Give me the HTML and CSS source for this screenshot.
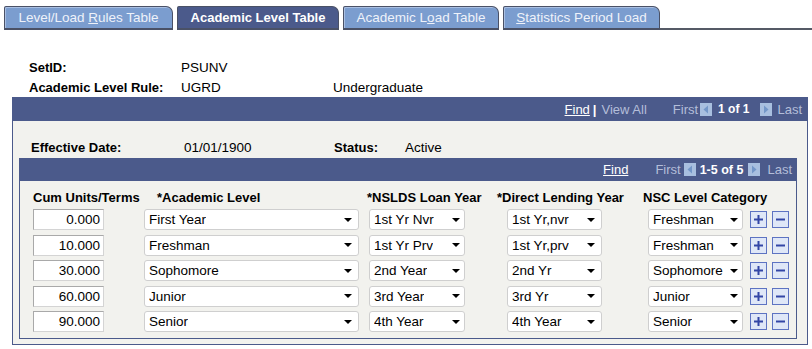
FILE: index.html
```html
<!DOCTYPE html>
<html>
<head>
<meta charset="utf-8">
<link rel="stylesheet" href="styles.css">
</head>
<body>
<div class="tabbar">
  <div class="tab t1"><span>Level/Load <u>R</u>ules Table</span></div>
  <div class="tab t2 active"><span>Academic Level Table</span></div>
  <div class="tab t3"><span>Academic L<u>o</u>ad Table</span></div>
  <div class="tab t4"><span><u>S</u>tatistics Period Load</span></div>
  <div class="tabfill"></div>
</div>

<div class="info">
  <div class="lbl">SetID:</div><div class="val">PSUNV</div><div class="desc"></div>
  <div class="lbl">Academic Level Rule:</div><div class="val">UGRD</div><div class="desc">Undergraduate</div>
</div>

<div class="panel">
  <div class="phead">
    <span class="lnk">Find</span><span class="sep">|</span><span class="dim">View All</span>
    <span class="dim first">First</span>
    <svg class="nav" width="12" height="13" viewBox="0 0 12 13"><rect width="12" height="13" fill="#a8bfdf"/><path d="M8 2.5 L3.5 6.5 L8 10.5Z" fill="#7497c8"/></svg>
    <b class="cnt">1 of 1</b>
    <svg class="nav" width="12" height="13" viewBox="0 0 12 13"><rect width="12" height="13" fill="#a8bfdf"/><path d="M4 2.5 L8.5 6.5 L4 10.5Z" fill="#7497c8"/></svg>
    <span class="dim last">Last</span>
  </div>
  <div class="pbody">
    <div class="eff">
      <div class="elbl">Effective Date:</div><div class="eval">01/01/1900</div>
      <div class="slbl">Status:</div><div class="sval">Active</div>
    </div>
    <div class="grid">
      <div class="ghead">
        <span class="lnk">Find</span>
        <span class="dim first">First</span>
        <svg class="nav" width="12" height="13" viewBox="0 0 12 13"><rect width="12" height="13" fill="#a8bfdf"/><path d="M8 2.5 L3.5 6.5 L8 10.5Z" fill="#7497c8"/></svg>
        <b class="cnt">1-5 of 5</b>
        <svg class="nav" width="12" height="13" viewBox="0 0 12 13"><rect width="12" height="13" fill="#a8bfdf"/><path d="M4 2.5 L8.5 6.5 L4 10.5Z" fill="#7497c8"/></svg>
        <span class="dim last">Last</span>
      </div>
      <div class="gbody">
        <div class="colheads">
          <div class="ch c1">Cum Units/Terms</div>
          <div class="ch c2">*Academic Level</div>
          <div class="ch c3">*NSLDS Loan Year</div>
          <div class="ch c4">*Direct Lending Year</div>
          <div class="ch c5">NSC Level Category</div>
        </div>

        <div class="row">
          <div class="inp">0.000</div>
          <div class="sel s1"><span>First Year</span><svg width="8" height="4" viewBox="0 0 8 4"><path d="M0 0H8L4 4Z" fill="#000"/></svg></div>
          <div class="sel s2"><span>1st Yr Nvr</span><svg width="8" height="4" viewBox="0 0 8 4"><path d="M0 0H8L4 4Z" fill="#000"/></svg></div>
          <div class="sel s3"><span>1st Yr,nvr</span><svg width="8" height="4" viewBox="0 0 8 4"><path d="M0 0H8L4 4Z" fill="#000"/></svg></div>
          <div class="sel s4"><span>Freshman</span><svg width="8" height="4" viewBox="0 0 8 4"><path d="M0 0H8L4 4Z" fill="#000"/></svg></div>
          <div class="btn plus"><svg width="11" height="11" viewBox="0 0 11 11"><path d="M4.5 1H6.5V4.5H10V6.5H6.5V10H4.5V6.5H1V4.5H4.5Z" fill="#3346a6"/></svg></div>
          <div class="btn minus"><svg width="11" height="11" viewBox="0 0 11 11"><path d="M1 4.5H10V6.5H1Z" fill="#3346a6"/></svg></div>
        </div>
        <div class="row">
          <div class="inp">10.000</div>
          <div class="sel s1"><span>Freshman</span><svg width="8" height="4" viewBox="0 0 8 4"><path d="M0 0H8L4 4Z" fill="#000"/></svg></div>
          <div class="sel s2"><span>1st Yr Prv</span><svg width="8" height="4" viewBox="0 0 8 4"><path d="M0 0H8L4 4Z" fill="#000"/></svg></div>
          <div class="sel s3"><span>1st Yr,prv</span><svg width="8" height="4" viewBox="0 0 8 4"><path d="M0 0H8L4 4Z" fill="#000"/></svg></div>
          <div class="sel s4"><span>Freshman</span><svg width="8" height="4" viewBox="0 0 8 4"><path d="M0 0H8L4 4Z" fill="#000"/></svg></div>
          <div class="btn plus"><svg width="11" height="11" viewBox="0 0 11 11"><path d="M4.5 1H6.5V4.5H10V6.5H6.5V10H4.5V6.5H1V4.5H4.5Z" fill="#3346a6"/></svg></div>
          <div class="btn minus"><svg width="11" height="11" viewBox="0 0 11 11"><path d="M1 4.5H10V6.5H1Z" fill="#3346a6"/></svg></div>
        </div>
        <div class="row">
          <div class="inp">30.000</div>
          <div class="sel s1"><span>Sophomore</span><svg width="8" height="4" viewBox="0 0 8 4"><path d="M0 0H8L4 4Z" fill="#000"/></svg></div>
          <div class="sel s2"><span>2nd Year</span><svg width="8" height="4" viewBox="0 0 8 4"><path d="M0 0H8L4 4Z" fill="#000"/></svg></div>
          <div class="sel s3"><span>2nd Yr</span><svg width="8" height="4" viewBox="0 0 8 4"><path d="M0 0H8L4 4Z" fill="#000"/></svg></div>
          <div class="sel s4"><span>Sophomore</span><svg width="8" height="4" viewBox="0 0 8 4"><path d="M0 0H8L4 4Z" fill="#000"/></svg></div>
          <div class="btn plus"><svg width="11" height="11" viewBox="0 0 11 11"><path d="M4.5 1H6.5V4.5H10V6.5H6.5V10H4.5V6.5H1V4.5H4.5Z" fill="#3346a6"/></svg></div>
          <div class="btn minus"><svg width="11" height="11" viewBox="0 0 11 11"><path d="M1 4.5H10V6.5H1Z" fill="#3346a6"/></svg></div>
        </div>
        <div class="row">
          <div class="inp">60.000</div>
          <div class="sel s1"><span>Junior</span><svg width="8" height="4" viewBox="0 0 8 4"><path d="M0 0H8L4 4Z" fill="#000"/></svg></div>
          <div class="sel s2"><span>3rd Year</span><svg width="8" height="4" viewBox="0 0 8 4"><path d="M0 0H8L4 4Z" fill="#000"/></svg></div>
          <div class="sel s3"><span>3rd Yr</span><svg width="8" height="4" viewBox="0 0 8 4"><path d="M0 0H8L4 4Z" fill="#000"/></svg></div>
          <div class="sel s4"><span>Junior</span><svg width="8" height="4" viewBox="0 0 8 4"><path d="M0 0H8L4 4Z" fill="#000"/></svg></div>
          <div class="btn plus"><svg width="11" height="11" viewBox="0 0 11 11"><path d="M4.5 1H6.5V4.5H10V6.5H6.5V10H4.5V6.5H1V4.5H4.5Z" fill="#3346a6"/></svg></div>
          <div class="btn minus"><svg width="11" height="11" viewBox="0 0 11 11"><path d="M1 4.5H10V6.5H1Z" fill="#3346a6"/></svg></div>
        </div>
        <div class="row">
          <div class="inp">90.000</div>
          <div class="sel s1"><span>Senior</span><svg width="8" height="4" viewBox="0 0 8 4"><path d="M0 0H8L4 4Z" fill="#000"/></svg></div>
          <div class="sel s2"><span>4th Year</span><svg width="8" height="4" viewBox="0 0 8 4"><path d="M0 0H8L4 4Z" fill="#000"/></svg></div>
          <div class="sel s3"><span>4th Year</span><svg width="8" height="4" viewBox="0 0 8 4"><path d="M0 0H8L4 4Z" fill="#000"/></svg></div>
          <div class="sel s4"><span>Senior</span><svg width="8" height="4" viewBox="0 0 8 4"><path d="M0 0H8L4 4Z" fill="#000"/></svg></div>
          <div class="btn plus"><svg width="11" height="11" viewBox="0 0 11 11"><path d="M4.5 1H6.5V4.5H10V6.5H6.5V10H4.5V6.5H1V4.5H4.5Z" fill="#3346a6"/></svg></div>
          <div class="btn minus"><svg width="11" height="11" viewBox="0 0 11 11"><path d="M1 4.5H10V6.5H1Z" fill="#3346a6"/></svg></div>
        </div>
      </div>
    </div>
  </div>
</div>
</body>
</html>
```
FILE: styles.css
```css
* { box-sizing: border-box; }
html, body { margin: 0; padding: 0; background: #fff; }
body {
  font-family: "Liberation Sans", Arial, sans-serif;
  font-size: 13.5px;
  color: #000;
  width: 812px;
  height: 349px;
  overflow: hidden;
}

/* tabs */
.tabbar {
  display: flex;
  align-items: flex-end;
  padding-top: 6px;
  padding-left: 4px;
  height: 30px;
}
.tab {
  height: 24px;
  margin-right: 4px;
  background: #7b9dcf;
  color: #eef2fa;
  font-size: 13.5px;
  display: flex;
  align-items: center;
  justify-content: center;
  border: 1px solid #4a5166;
  border-bottom: 2px solid #4a5166;
  border-radius: 2px 7px 0 0;
  box-shadow: inset 1px 1px 0 #a9bfe2;
  white-space: nowrap;
}
.tab u { text-decoration-thickness: 1px; text-underline-offset: 1px; }
.t1 { width: 169px; }
.t2 { width: 162px; }
.t3 { width: 156px; }
.t4 { width: 157px; margin-right: 0; }
.tab.active {
  background: #4b5a8b;
  color: #fff;
  font-weight: bold;
  font-size: 13px;
  box-shadow: none;
}
.tabfill {
  flex: 1;
  height: 2px;
  background: #555a66;
}

/* info */
.info {
  display: grid;
  grid-template-columns: 152px 152px auto;
  grid-auto-rows: 20px;
  padding-left: 29px;
  margin-top: 27px;
  align-items: center;
}
.lbl { font-weight: bold; font-size: 13px; }

/* panel */
.panel {
  margin-left: 12px;
  width: 796px;
  height: 248px;
  border: 1px solid #4b5a8b;
  border-top: none;
  background: #f2f2ee;
}
.phead {
  height: 24px;
  background: #4b5a8b;
  display: flex;
  align-items: center;
  justify-content: flex-end;
  padding-right: 5px;
  color: #fff;
  font-size: 13px;
}
.lnk { text-decoration: underline; color: #fff; }
.sep { font-weight: bold; margin: 0 5px 0 3px; color: #fff; }
.dim { color: #b4bed9; }
.first { margin-left: 26px; margin-right: 2px; }
.cnt { font-size: 12px; margin: 0 11px 0 6px; color: #fff; }
.last { margin-left: 5px; }
.nav { display: block; }

.pbody { padding: 0 10px 0 6px; }
.eff {
  display: grid;
  grid-template-columns: 153px 150px 71px auto;
  height: 36px;
  align-items: center;
  padding-left: 12px;
  padding-top: 16px;
}
.elbl, .slbl { font-weight: bold; font-size: 13px; }

.grid {
  margin-top: 1px;
  border: 1px solid #4b5a8b;
  border-top: none;
  height: 181px;
}
.ghead {
  height: 23px;
  background: #4b5a8b;
  display: flex;
  align-items: center;
  justify-content: flex-end;
  padding-right: 4px;
  color: #fff;
  font-size: 13px;
}
.ghead .first { margin-left: 27px; margin-right: 3px; }
.ghead .cnt { font-size: 12.5px; margin: 0 5px 0 4px; }
.ghead .last { margin-left: 7px; }

.gbody { padding-left: 13px; }
.colheads {
  display: flex;
  height: 28px;
  padding-top: 9px;
  font-weight: bold;
  font-size: 13px;
}
.c1 { width: 124px; }
.c2 { width: 210px; }
.c3 { width: 130px; }
.c4 { width: 146px; }

.row {
  display: flex;
  align-items: center;
  height: 21px;
  margin-bottom: 4.5px;
}
.inp {
  width: 71px;
  height: 21px;
  background: #fff;
  border: 1px solid #a9a9a9;
  border-right-color: #d4d4d4;
  border-bottom-color: #d4d4d4;
  text-align: right;
  padding-right: 3px;
  line-height: 19px;
}
.sel {
  height: 21px;
  background: #fff;
  border: 1px solid #cfcfcf;
  border-radius: 3px;
  display: flex;
  align-items: center;
  justify-content: space-between;
  padding: 0 6px 0 4px;
  white-space: nowrap;
  overflow: hidden;
}
.sel span { overflow: hidden; }
.sel svg { flex: none; }
.s1 { width: 215px; margin-left: 40px; }
.s2 { width: 96px; margin-left: 10px; padding-right: 4px; }
.s3 { width: 95px; margin-left: 42px; }
.s4 { width: 95px; margin-left: 46px; padding-right: 4px; }
.btn {
  width: 17px;
  height: 17px;
  border: 1px solid #5d73c2;
  background: #dfe7f7;
  display: flex;
  align-items: center;
  justify-content: center;
}
.plus { margin-left: 7px; }
.minus { margin-left: 5px; }
```
